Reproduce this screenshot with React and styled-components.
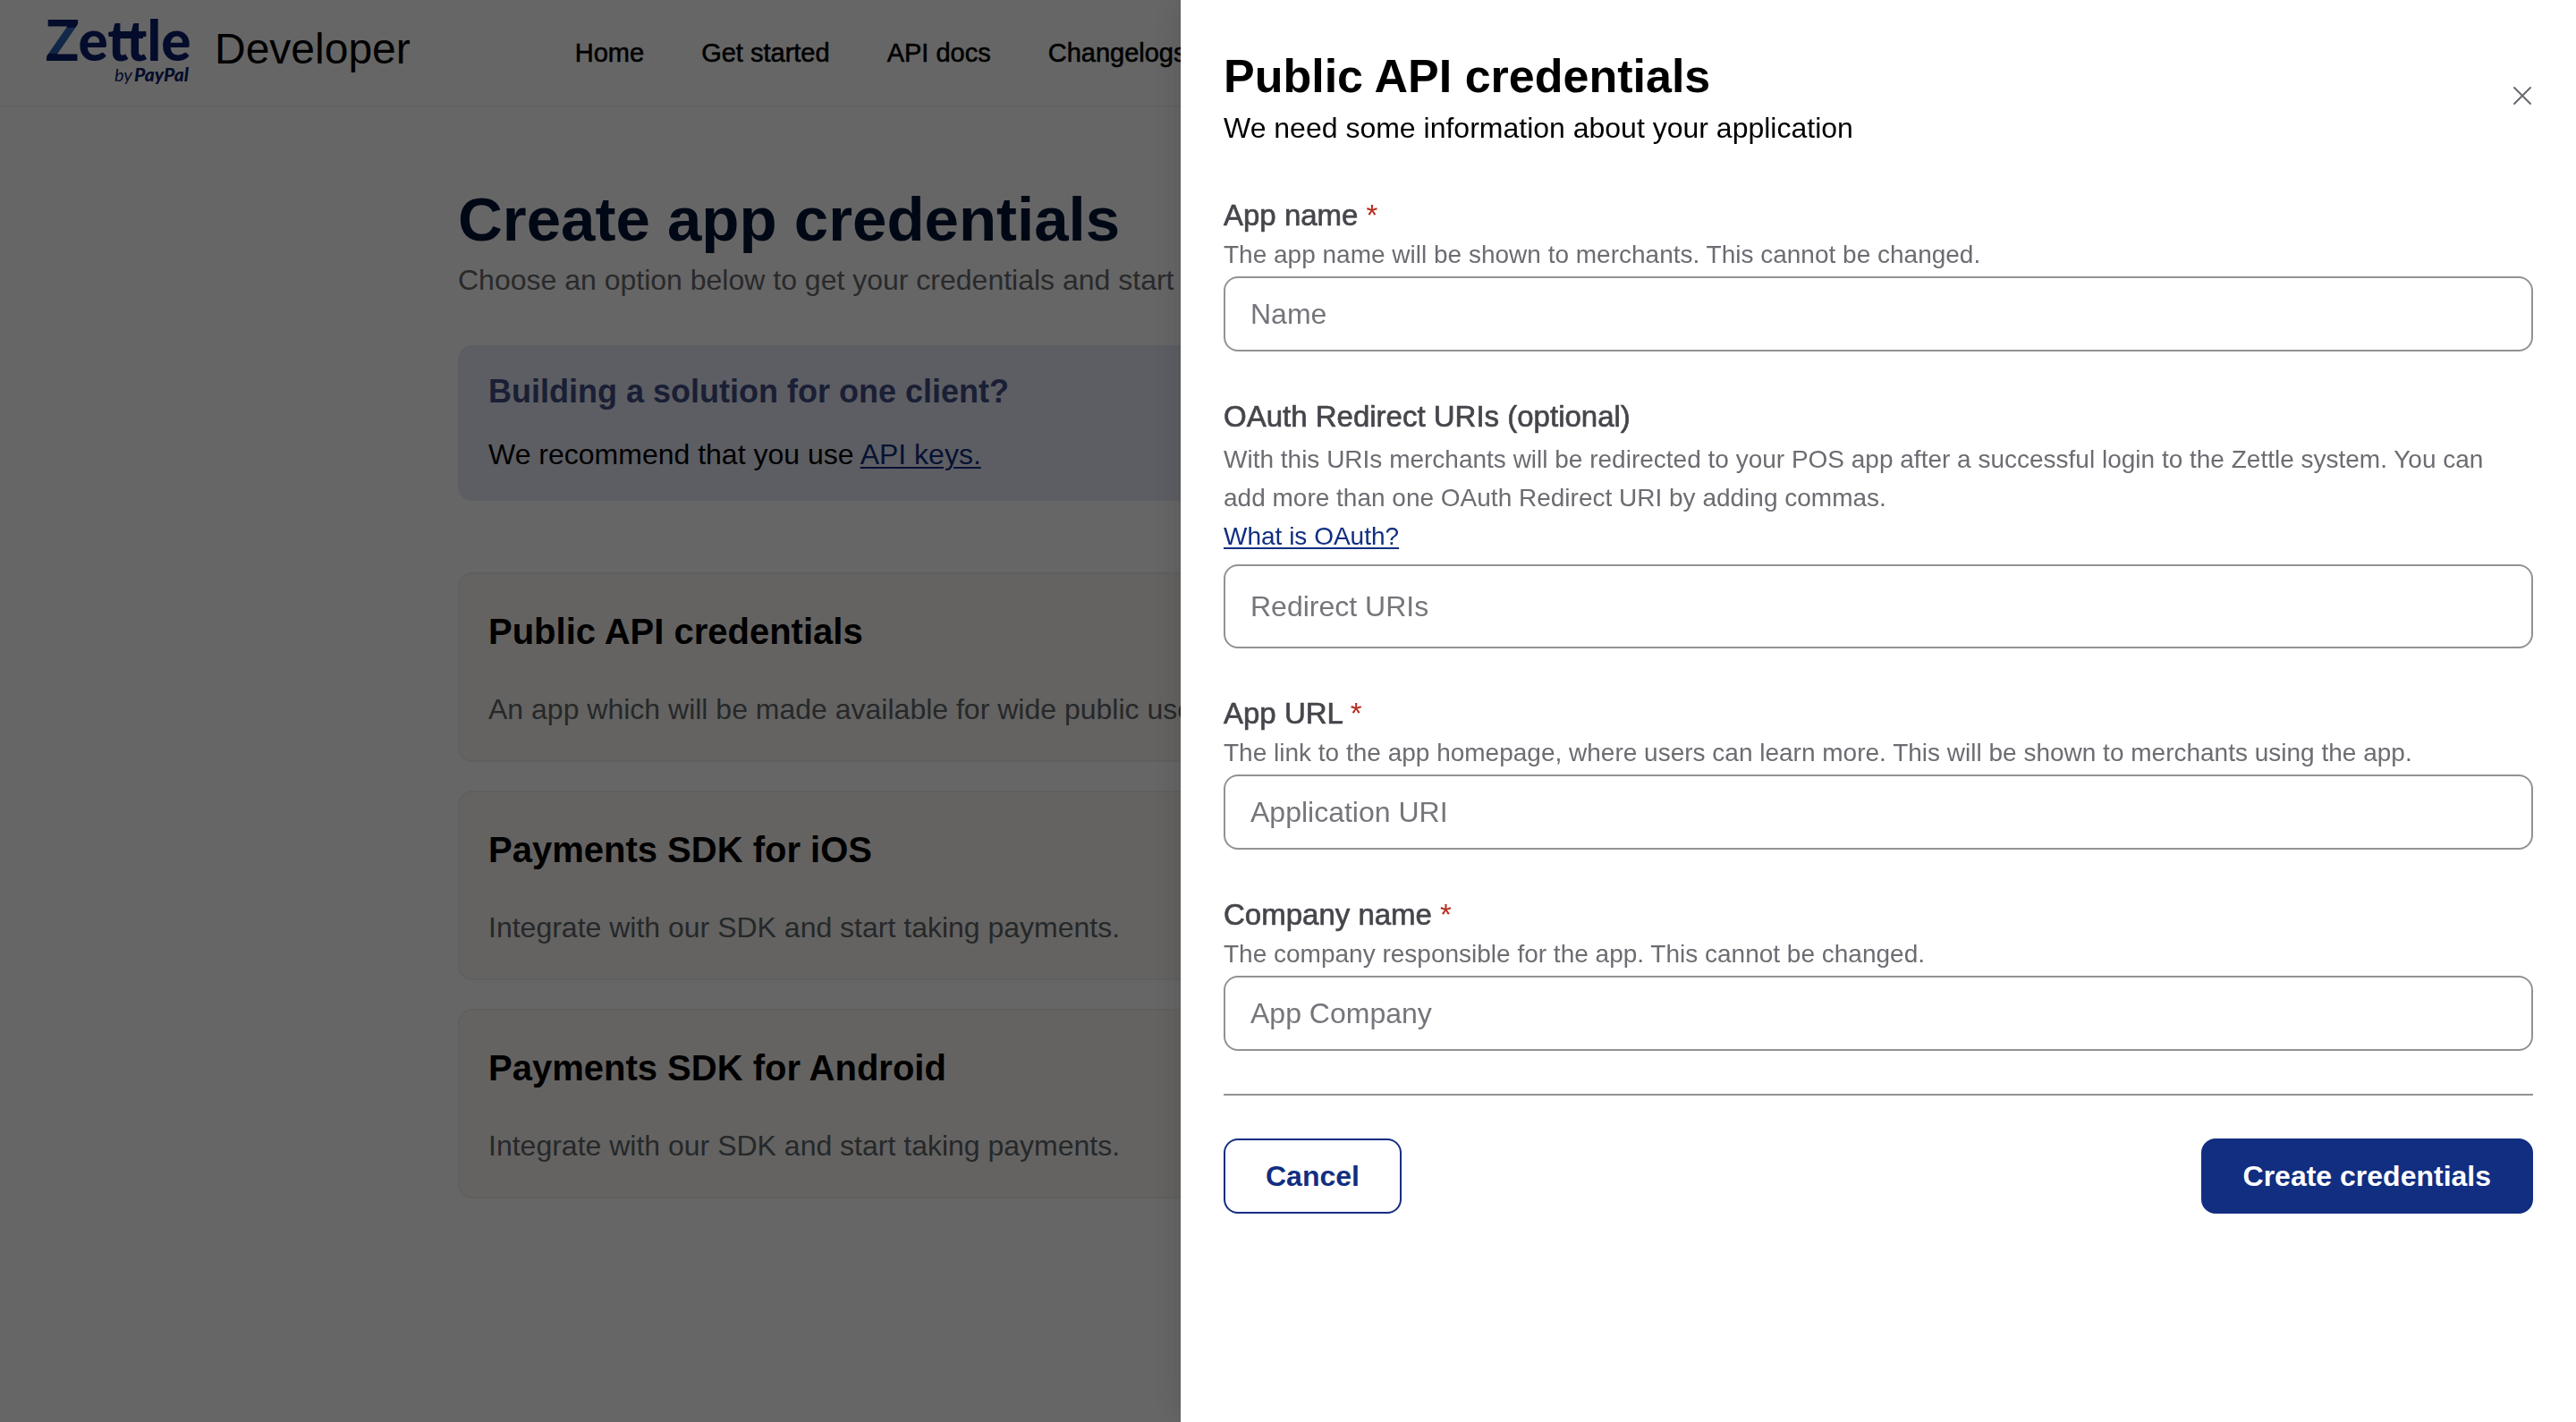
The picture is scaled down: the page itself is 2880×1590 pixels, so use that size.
import React from "react";
import styled, { createGlobalStyle } from "styled-components";

const GlobalStyle = createGlobalStyle`
  *, *::before, *::after { box-sizing: border-box; }
  body {
    margin: 0;
    background: #fff;
    color: #000;
    font-family: "Helvetica Neue", "Liberation Sans", Arial, sans-serif;
    font-size: 32px;
    overflow: hidden;
  }
  h1, h2, p { margin: 0; }
`;

/* Page behind the drawer */

const Header = styled.header`
  display: flex;
  align-items: center;
  height: 120px;
  padding: 0 46px;
  border-bottom: 2px solid #f5f5f5;
`;

const Brand = styled.a`
  display: flex;
  align-items: center;
  gap: 24px;
  color: #000;
  text-decoration: none;
`;

const BrandName = styled.span`
  padding-bottom: 8px;
  font-size: 48px;
  line-height: 56px;
`;

const Nav = styled.nav`
  display: flex;
  gap: 64px;
  margin-left: 184px;
`;

const NavLink = styled.a`
  color: #000;
  font-size: 29px;
  line-height: 40px;
  white-space: nowrap;
  text-decoration: none;
  -webkit-text-stroke: 0.02em currentColor;
`;

const Main = styled.main`
  max-width: 1856px;
  margin: 0 auto;
  padding-top: 86px;
`;

const PageTitle = styled.h1`
  color: #001435;
  font-size: 69px;
  line-height: 80px;
`;

const PageLead = styled.p`
  color: #68686c;
  line-height: 54px;
`;

const Banner = styled.section`
  display: flex;
  flex-direction: column;
  gap: 30px;
  margin: 46px 0 80px;
  padding: 32px 34px;
  border-radius: 16px;
  background: #e8ebf8;
`;

const BannerTitle = styled.h2`
  color: #414e85;
  font-size: 36px;
  line-height: 40px;
`;

const BannerText = styled.p`
  line-height: 40px;
`;

const Link = styled.a`
  color: #112e81;
  text-decoration: underline;
  text-decoration-thickness: 2px;
  text-underline-offset: 3px;
`;

const CardList = styled.div`
  display: grid;
  gap: 32px;
`;

const Card = styled.article`
  display: grid;
  gap: 36px;
  padding: 36px 32px 34px;
  border: 2px solid #f0eeea;
  border-radius: 16px;
  background: #faf8f4;
`;

const CardTitle = styled.h2`
  font-size: 40px;
  line-height: 56px;
`;

const CardText = styled.p`
  color: #606468;
  line-height: 46px;
`;

/* Drawer */

const Overlay = styled.div`
  position: fixed;
  inset: 0;
  display: flex;
  justify-content: flex-end;
  background: rgba(0, 0, 0, 0.6);
`;

const Drawer = styled.aside`
  width: calc(100% * 13 / 24);
  height: 100%;
  padding: 48px;
  overflow: auto;
  background: #fff;
  box-shadow: 0 0 40px rgba(0, 0, 0, 0.15);
`;

const DrawerHeader = styled.header`
  display: flex;
  align-items: center;
  justify-content: space-between;
  margin-bottom: 52px;
`;

const DrawerTitle = styled.h2`
  font-size: 52px;
  line-height: 74px;
`;

const DrawerLead = styled.p`
  line-height: 42px;
`;

const CloseButton = styled.button`
  display: flex;
  padding: 0;
  border: 0;
  background: none;
  color: #68686e;
  cursor: pointer;
`;

const Fields = styled.div`
  display: grid;
  gap: 48px;
`;

const Field = styled.div`
  display: flex;
  flex-direction: column;
`;

const Label = styled.label`
  color: #45454b;
  font-size: 33px;
  line-height: 50px;
  -webkit-text-stroke: 0.02em currentColor;
`;

const Required = styled.span`
  color: #b62c1e;
  -webkit-text-stroke: 0;
`;

const Hint = styled.p`
  padding: ${(p) => (p.$long ? "1px 28px 4px 0" : "0")};
  margin-bottom: 6px;
  color: #6c6c72;
  font-size: 28px;
  line-height: ${(p) => (p.$long ? "43px" : "37px")};
`;

const TextInput = styled.input`
  width: 100%;
  padding: ${(p) => (p.$tall ? "25px 28px" : "20px 28px")};
  border: 2px solid #929292;
  border-radius: 16px;
  background: #fff;
  color: #000;
  font: inherit;
  line-height: 40px;

  &::placeholder {
    color: #75757b;
    opacity: 1;
  }
`;

const Actions = styled.footer`
  display: flex;
  justify-content: space-between;
  margin-top: 48px;
  padding-top: 48px;
  border-top: 2px solid #929292;
`;

const Button = styled.button`
  padding: 20px 45px;
  border: 2px solid #112e81;
  border-radius: 16px;
  background: ${(p) => (p.$primary ? "#112e81" : "#fff")};
  color: ${(p) => (p.$primary ? "#fff" : "#112e81")};
  font: inherit;
  font-weight: 700;
  line-height: 40px;
  cursor: pointer;
`;

const ZettleLogo = () => (
  <svg width="170" height="110" viewBox="46 4 170 110" role="img" aria-label="Zettle by PayPal">
    <defs>
      <linearGradient id="zed" gradientUnits="userSpaceOnUse" x1="0" y1="23" x2="0" y2="68">
        <stop offset="0.17" stopColor="#0b1f6b" />
        <stop offset="0.17" stopColor="#2f6cc0" />
        <stop offset="0.83" stopColor="#265bab" />
        <stop offset="0.83" stopColor="#0b1f6b" />
      </linearGradient>
    </defs>
    <g fill="#0b1f6b" fontFamily="Lato, sans-serif">
      <text x="51" y="68" fontSize="62" fontWeight="900">
        <tspan fill="url(#zed)">Z</tspan>
        <tspan>ettle</tspan>
      </text>
      <rect x="126" y="36" width="34" height="7" />
      <text x="128" y="91" fontSize="20" fontStyle="italic">
        by
      </text>
      <text x="150" y="91" fontSize="21" fontStyle="italic" fontWeight="900">
        PayPal
      </text>
    </g>
  </svg>
);

const navItems = ["Home", "Get started", "API docs", "Changelogs"];

const cards = [
  { title: "Public API credentials", text: "An app which will be made available for wide public use." },
  { title: "Payments SDK for iOS", text: "Integrate with our SDK and start taking payments." },
  { title: "Payments SDK for Android", text: "Integrate with our SDK and start taking payments." },
];

const fields = [
  {
    id: "app-name",
    label: "App name",
    required: true,
    hint: "The app name will be shown to merchants. This cannot be changed.",
    placeholder: "Name",
  },
  {
    id: "redirect-uris",
    label: "OAuth Redirect URIs (optional)",
    hint:
      "With this URIs merchants will be redirected to your POS app after a successful login to the Zettle system. You can add more than one OAuth Redirect URI by adding commas.",
    link: "What is OAuth?",
    placeholder: "Redirect URIs",
  },
  {
    id: "app-url",
    label: "App URL",
    required: true,
    hint:
      "The link to the app homepage, where users can learn more. This will be shown to merchants using the app.",
    placeholder: "Application URI",
  },
  {
    id: "company-name",
    label: "Company name",
    required: true,
    hint: "The company responsible for the app. This cannot be changed.",
    placeholder: "App Company",
  },
];

function FormField({ id, label, required, hint, link, placeholder }) {
  return (
    <Field>
      <Label htmlFor={id}>
        {label}
        {required && <Required> *</Required>}
      </Label>
      <Hint id={`${id}-hint`} $long={Boolean(link)}>
        {hint}
        {link && (
          <>
            <br />
            <Link href="#oauth">{link}</Link>
          </>
        )}
      </Hint>
      <TextInput
        id={id}
        type="text"
        placeholder={placeholder}
        aria-describedby={`${id}-hint`}
        required={required}
        $tall={Boolean(link)}
      />
    </Field>
  );
}

export default function App() {
  return (
    <>
      <GlobalStyle />
      <Header>
        <Brand href="#home">
          <ZettleLogo />
          <BrandName>Developer</BrandName>
        </Brand>
        <Nav>
          {navItems.map((item) => (
            <NavLink key={item} href="#nav">
              {item}
            </NavLink>
          ))}
        </Nav>
      </Header>
      <Main>
        <PageTitle>Create app credentials</PageTitle>
        <PageLead>Choose an option below to get your credentials and start</PageLead>
        <Banner>
          <BannerTitle>Building a solution for one client?</BannerTitle>
          <BannerText>
            We recommend that you use <Link href="#keys">API keys.</Link>
          </BannerText>
        </Banner>
        <CardList>
          {cards.map((card) => (
            <Card key={card.title}>
              <CardTitle>{card.title}</CardTitle>
              <CardText>{card.text}</CardText>
            </Card>
          ))}
        </CardList>
      </Main>
      <Overlay>
        <Drawer role="dialog" aria-labelledby="drawer-title">
          <DrawerHeader>
            <div>
              <DrawerTitle id="drawer-title">Public API credentials</DrawerTitle>
              <DrawerLead>We need some information about your application</DrawerLead>
            </div>
            <CloseButton type="button" aria-label="Close">
              <svg width="24" height="24" viewBox="0 0 24 24" fill="none" stroke="currentColor" strokeWidth="2" strokeLinecap="round">
                <path d="M3 4 21 22M21 4 3 22" />
              </svg>
            </CloseButton>
          </DrawerHeader>
          <form>
            <Fields>
              {fields.map((field) => (
                <FormField key={field.id} {...field} />
              ))}
            </Fields>
            <Actions>
              <Button type="button">Cancel</Button>
              <Button type="submit" $primary>
                Create credentials
              </Button>
            </Actions>
          </form>
        </Drawer>
      </Overlay>
    </>
  );
}
